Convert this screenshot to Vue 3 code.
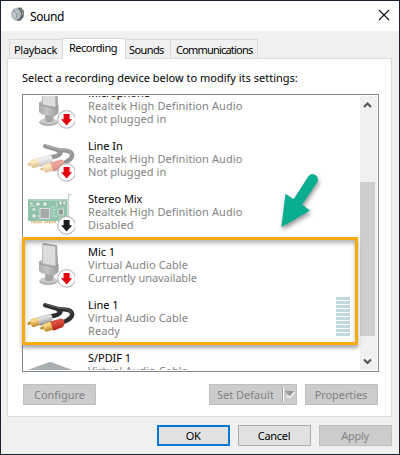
<script setup>
const tabs = [
  { label: 'Playback', cls: 't-playback' },
  { label: 'Recording', cls: 't-recording', active: true },
  { label: 'Sounds', cls: 't-sounds' },
  { label: 'Communications', cls: 't-comm' }
]
const devices = [
  { name: 'Microphone', driver: 'Realtek High Definition Audio', status: 'Not plugged in', icon: 'mic', badge: '#e3000f' },
  { name: 'Line In', driver: 'Realtek High Definition Audio', status: 'Not plugged in', icon: 'rca', dim: true, badge: '#e3000f' },
  { name: 'Stereo Mix', driver: 'Realtek High Definition Audio', status: 'Disabled', icon: 'card', badge: '#1c1c1c' },
  { name: 'Mic 1', driver: 'Virtual Audio Cable', status: 'Currently unavailable', icon: 'mic', badge: '#e3000f', tight: true },
  { name: 'Line 1', driver: 'Virtual Audio Cable', status: 'Ready', icon: 'rca', meter: true },
  { name: 'S/PDIF 1', driver: 'Virtual Audio Cable', status: '', icon: 'spdif' }
]
</script>

<template>
  <div class="window">
    <header class="title">
      <svg class="speaker" width="14" height="16" viewBox="0 0 14 16">
        <path d="M5 1 L10 0.5 L13 4 L12.5 10 L9 14 L5 13Z" fill="#555a5c" />
        <path d="M9 1.5 L12 4 L11 8" fill="none" stroke="#a7acae" />
        <ellipse cx="5" cy="7.3" rx="4.6" ry="6" fill="#a4adb1" stroke="#c4c8ca" />
        <ellipse cx="4.6" cy="7.5" rx="2.9" ry="4" fill="#bdcbd2" />
        <path d="M2 3.5 L6 7 L5 11" fill="none" stroke="#7f8b91" />
        <path d="M5 13 L8 14 L9 11" fill="#777e81" />
      </svg>
      <span class="caption">Sound</span>
      <svg class="close" width="12" height="12" viewBox="0 0 12 12"><path d="M1 1 L11 11 M11 1 L1 11" stroke="#111" stroke-width="1.1" /></svg>
    </header>

    <nav class="tabs">
      <div v-for="t in tabs" :key="t.label" class="tab" :class="[t.cls, { active: t.active }]"><span>{{ t.label }}</span></div>
    </nav>

    <main class="panel">
      <p class="hint">Select a recording device below to modify its settings:</p>
      <div class="list">
        <div class="rows">
          <div v-for="d in devices" :key="d.name" class="row">
            <svg class="icon" width="48" height="48" viewBox="0 0 48 48">
              <defs>
                <linearGradient id="gold" x1="0" y1="0" x2="0.3" y2="1"><stop offset="0" stop-color="#c29430" /><stop offset=".4" stop-color="#ffe08c" /><stop offset="1" stop-color="#b9801f" /></linearGradient>
                <linearGradient id="silver" x1="0" y1="0" x2="0.3" y2="1"><stop offset="0" stop-color="#a2a2a6" /><stop offset=".4" stop-color="#e2e2e5" /><stop offset="1" stop-color="#838387" /></linearGradient>
                <linearGradient id="red" x1="0" y1="0" x2="0.3" y2="1"><stop offset="0" stop-color="#b4392b" /><stop offset=".4" stop-color="#dd5242" /><stop offset="1" stop-color="#b01a0f" /></linearGradient>
                <linearGradient id="grey" x1="0" y1="0" x2="1" y2="0"><stop offset="0" stop-color="#a2a2a2" /><stop offset=".4" stop-color="#bdbdbd" /><stop offset="1" stop-color="#8f8f8f" /></linearGradient>
              </defs>
              <g v-if="d.icon === 'mic'" opacity=".88">
                <ellipse cx="21.5" cy="40.3" rx="9.2" ry="3.7" fill="#a3a3a3" />
                <ellipse cx="21.5" cy="39" rx="8.6" ry="2.9" fill="#c6c6c6" />
                <path d="M18 33 H27 L26 39.5 Q22 41 18.5 39.5Z" fill="#9a9a9a" />
                <path d="M15.3 3 L17 2 L30 4.2 L31.2 24 L28 26 L15 23Z" fill="#989898" />
                <path d="M15.8 3.6 L28.2 5.6 L28.5 25 L15.8 22.5Z" fill="#d9d9d9" />
                <path d="M12 20.5 L14.5 19 L15.5 22 L27.5 25 L31.5 23 V31 L27.5 34.3 L15 32.5 L12 30Z" fill="url(#grey)" />
                <path d="M12.3 21.5 L15 23.5 L27.5 26.2 L31.3 24" fill="none" stroke="#858585" stroke-width=".8" />
              </g>
              <g v-else-if="d.icon === 'rca'" :opacity="d.dim ? 0.5 : 1">
                <path d="M30 15 C36 17.5 34 20.5 24 22.5" fill="none" stroke="#2b2b2b" stroke-width="4.4" />
                <path d="M18.2 11.2 L33 15.5 C48 14 49.5 23.5 35.5 28.5" fill="none" stroke="#303030" stroke-width="4.3" stroke-linecap="round" />
                <path d="M19 10.5 L33 14.5 C40 14 43.7 16 44.1 19" fill="none" stroke="#686868" stroke-width=".9" />
                <path d="M0.5 29 L4 26.5 L5.5 30 L1.2 31Z" fill="#c28b23" />
                <path d="M3.5 25.3 L11 23.2 L13 31 L6 33.2 L3.8 31Z" fill="url(#gold)" />
                <path d="M10.5 23 L22 20 Q26 20.5 25.5 25 L24 28 L13.2 32Z" fill="url(#silver)" />
                <path d="M13 33.7 L17 31.5 L18.5 34.5 L14 35.7Z" fill="#c28b23" />
                <path d="M16.5 29.4 L24 27.5 L26 35.8 L19 37.8 L16.6 35.5Z" fill="url(#gold)" />
                <path d="M23.3 27.5 L34 24.4 Q38 25 37.4 30 L36 33 L26.3 36.8Z" fill="url(#red)" />
              </g>
              <g v-else-if="d.icon === 'card'" opacity=".66">
                <path d="M4 33 H15 V35.3 H4Z M17 33 H29 V35.3 H17Z" fill="#cfa25b" />
                <path d="M5.5 33 v2.5 M8 33 v2.5 M10.5 33 v2.5 M13 33 v2.5 M19 33 v2.5 M21.5 33 v2.5 M24 33 v2.5 M26.5 33 v2.5" stroke="#fff0cb" stroke-width=".6" />
                <rect x="1" y="11" width="39.5" height="22" fill="#57a681" />
                <path d="M2 12 H39 M24 19 H28 M24 22 H29 M24 25 H28 M24 28 H30 M30 14 V19 M2 18 H9 M10 28 H14 M32 30 H38" stroke="#a9d6b9" stroke-width="1" />
                <rect x="13" y="20.5" width="9.5" height="10" fill="#777d7b" stroke="#cad3cf" />
                <rect x="31" y="21" width="5.5" height="6" fill="#606b66" stroke="#c0d1c8" />
                <g fill="#dbe5dd" stroke="#437a60" stroke-width=".6"><rect x="9" y="14" width="4" height="4" /><rect x="16" y="14" width="4" height="4" /><rect x="3" y="14" width="3" height="3" /><rect x="32" y="13" width="3" height="4" /><rect x="36" y="13" width="2.5" height="4" /><rect x="5" y="20" width="4" height="3" /><rect x="5" y="26" width="4" height="4" /></g>
                <path d="M44.5 6.5 H41.5 V30" fill="none" stroke="#b9bdbd" stroke-width="1.4" />
              </g>
              <path v-else d="M2 22.6 L21.5 15.2 Q23 14.7 24.5 15.2 L44 22.6 V40 H2Z" fill="#a9afb1" />
              <g v-if="d.badge">
                <circle cx="39.6" cy="37.4" r="8.8" fill="#fff" stroke="#a9a9a9" stroke-width="1" />
                <path d="M36.6 32 H42.6 V37.3 H45.2 L39.6 43.6 L34 37.3 H36.6Z" :fill="d.badge" />
              </g>
            </svg>
            <div class="info">
              <div class="name">{{ d.name }}</div>
              <div class="driver">{{ d.driver }}</div>
              <div class="status" :class="{ tight: d.tight }">{{ d.status }}</div>
            </div>
            <div v-if="d.meter" class="meter"><i v-for="n in 10" :key="n"></i></div>
          </div>
        </div>
        <div class="scroll">
          <svg width="15" height="17" viewBox="0 0 15 17"><path d="M4 11 L7.5 7.5 L11 11" fill="none" stroke="#555" stroke-width="2.1" /></svg>
          <div class="thumb"></div>
          <svg width="15" height="17" viewBox="0 0 15 17"><path d="M4 6.5 L7.5 10 L11 6.5" fill="none" stroke="#555" stroke-width="2.1" /></svg>
        </div>
      </div>
      <div class="actions">
        <button class="off configure">Configure</button>
        <button class="off split"><span>Set Default</span><i class="sep"></i><svg width="10" height="7" viewBox="0 0 10 7"><path d="M1 6 L5.5 6.8 L10 1.5 L9 0Z" fill="#fff" /><path d="M0 0 H9.5 L4.8 5.6Z" fill="#999" /></svg></button>
        <button class="off props">Properties</button>
      </div>
    </main>

    <footer class="footer">
      <button class="ok">OK</button>
      <button class="cancel">Cancel</button>
      <button class="off apply">Apply</button>
    </footer>

    <div class="highlight"></div>
    <svg class="arrow" width="50" height="70" viewBox="270 168 50 70">
      <path d="M281.3 227.2 L285.5 193.8 L293.6 199.2 L308.4 176.2 A5.3 5.3 0 0 1 317.3 181.8 L302.2 204.8 L310 210.4Z" fill="#08ae8f" />
    </svg>
  </div>
</template>

<style>
body { margin: 0; }
</style>

<style scoped>
* { box-sizing: border-box; }
.window { position: relative; width: 400px; height: 455px; background: #f0f0f0; border: 1px solid #18222f; font-family: "Noto Sans", "Open Sans", sans-serif; font-size: 11px; color: #000; overflow: hidden; display: flex; flex-direction: column; white-space: nowrap; }
.title { height: 30px; flex: none; background: #fff; display: flex; align-items: center; padding: 0 9px 0 10px; }
.speaker { display: block; margin-top: -2px; }
.caption { margin-left: 5px; font-size: 12px; letter-spacing: -.4px; }
.close { margin-left: auto; margin-top: -2px; }
.tabs { height: 28px; flex: none; display: flex; align-items: flex-end; position: relative; z-index: 1; margin: 0 0 -1px 8px; }
.tab { height: 19px; margin-bottom: 1px; border: 1px solid #d9d9d9; border-bottom: 0; background: #f0f0f0; line-height: 19px; font-size: 11px; }
.active { height: 21px; margin-bottom: 0; background: #fff; line-height: 18px; }
.t-playback { width: 53px; border-right: 0; padding-left: 4px; letter-spacing: -.3px; }
.t-recording { width: 64px; padding-left: 6px; letter-spacing: -.5px; }
.t-sounds { width: 45px; border-left: 0; padding-left: 3px; letter-spacing: -.6px; }
.t-comm { width: 87px; border-left: 0; padding-left: 5px; letter-spacing: -.8px; }
.panel { width: 385px; height: 359px; flex: none; margin-left: 6px; border: 1px solid #dcdcdc; background: #fff; padding: 0 12px 0 14px; }
.hint { margin: 10px 0 0; height: 18px; line-height: 18px; font-size: 11px; }
.list { margin-top: 7px; width: 357px; height: 278px; border: 1px solid #828790; padding: 1px; display: flex; overflow: hidden; }
.rows { width: 337px; height: 274px; overflow: hidden; }
.row { height: 53px; display: flex; padding: 1px 9px 0 3px; align-items: flex-start; }
.row:first-child { margin-top: -15px; }
.icon { display: block; flex: none; }
.info { margin: 4px 0 0 13px; line-height: 13px; font-size: 11px; }
.name { letter-spacing: -.05px; }
.driver, .status { color: #838383; letter-spacing: .08px; }
.status.tight { letter-spacing: -.05px; }
.meter { margin: 3px 0 0 auto; display: grid; gap: 1px; width: 14px; }
.meter i { height: 3px; background: #c0d9e2; }
.scroll { width: 17px; height: 274px; margin-left: 1px; background: #f0f0f0; display: flex; flex-direction: column; justify-content: space-between; }
.scroll svg { display: block; }
.thumb { width: 15px; height: 154px; background: #cdcdcd; margin-top: 52px; }
.actions { display: flex; margin: 12px 0 0 1px; }
button { width: 73px; height: 21px; margin: 0; padding: 0 1px 0 0; border: 1px solid #adadad; background: #e1e1e1; font: inherit; font-size: 11px; line-height: 18px; color: #000; display: flex; justify-content: center; align-items: center; flex: none; white-space: nowrap; }
button.off { background: #ccc; border-color: #bfbfbf; color: #838383; }
button.configure { padding: 0; }
button.split { width: 88px; margin-left: 113px; justify-content: flex-start; padding-left: 7px; padding-right: 0; }
.sep { width: 2px; height: 15px; margin-left: auto; border-left: 1px solid #a0a0a0; border-right: 1px solid #fff; }
.split svg { margin: 0 1px 0 1px; }
button.props { margin-left: 8px; letter-spacing: -.1px; }
.footer { display: flex; gap: 8px; justify-content: flex-end; padding: 8px 7px 0 0; }
button.ok { border: 2px solid #0078d7; letter-spacing: -.5px; }
.cancel { letter-spacing: -.3px; }
.apply { letter-spacing: -.3px; }
.highlight { position: absolute; left: 21px; top: 236px; width: 336px; height: 108px; border: 3px solid #f9ab0b; box-shadow: 0 3px 4px rgba(0,0,0,.35), inset 0 3px 4px rgba(0,0,0,.3); }
.arrow { position: absolute; left: 269px; top: 167px; filter: drop-shadow(1px 3px 2px rgba(0,0,0,.4)); }
</style>
